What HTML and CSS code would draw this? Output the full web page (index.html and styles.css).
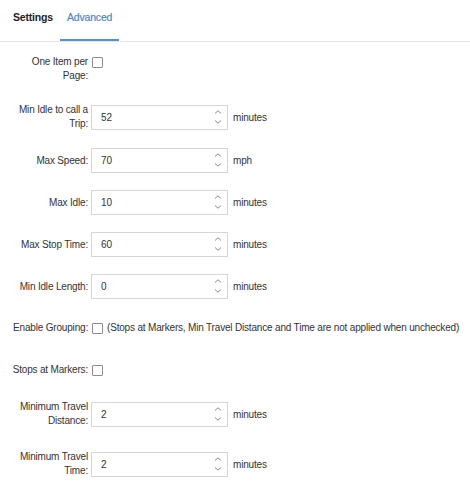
FILE: index.html
```html
<!DOCTYPE html>
<html lang="en">
<head>
  <meta charset="UTF-8">
  <meta name="viewport" content="width=device-width, initial-scale=1.0">
  <title>Trip Settings</title>
  <link rel="stylesheet" href="styles.css">
</head>
<body>
  <div class="tabs">
    <a class="tab">Settings</a>
    <a class="tab active">Advanced</a>
  </div>

  <form class="advanced">
    <div class="row check first">
      <label class="lbl">One Item per Page:</label>
      <input type="checkbox" class="box">
    </div>

    <div class="row">
      <label class="lbl">Min Idle to call a Trip:</label>
      <div class="spin"><input type="text" value="52"><span class="arrows"><svg viewBox="0 0 8 4"><path d="M1 3.5 4 .8 7 3.5"/></svg><svg viewBox="0 0 8 4"><path d="M1 .5 4 3.2 7 .5"/></svg></span></div>
      <span class="unit">minutes</span>
    </div>

    <div class="row">
      <label class="lbl">Max Speed:</label>
      <div class="spin"><input type="text" value="70"><span class="arrows"><svg viewBox="0 0 8 4"><path d="M1 3.5 4 .8 7 3.5"/></svg><svg viewBox="0 0 8 4"><path d="M1 .5 4 3.2 7 .5"/></svg></span></div>
      <span class="unit">mph</span>
    </div>

    <div class="row">
      <label class="lbl">Max Idle:</label>
      <div class="spin"><input type="text" value="10"><span class="arrows"><svg viewBox="0 0 8 4"><path d="M1 3.5 4 .8 7 3.5"/></svg><svg viewBox="0 0 8 4"><path d="M1 .5 4 3.2 7 .5"/></svg></span></div>
      <span class="unit">minutes</span>
    </div>

    <div class="row">
      <label class="lbl">Max Stop Time:</label>
      <div class="spin"><input type="text" value="60"><span class="arrows"><svg viewBox="0 0 8 4"><path d="M1 3.5 4 .8 7 3.5"/></svg><svg viewBox="0 0 8 4"><path d="M1 .5 4 3.2 7 .5"/></svg></span></div>
      <span class="unit">minutes</span>
    </div>

    <div class="row">
      <label class="lbl">Min Idle Length:</label>
      <div class="spin"><input type="text" value="0"><span class="arrows"><svg viewBox="0 0 8 4"><path d="M1 3.5 4 .8 7 3.5"/></svg><svg viewBox="0 0 8 4"><path d="M1 .5 4 3.2 7 .5"/></svg></span></div>
      <span class="unit">minutes</span>
    </div>

    <div class="row check">
      <label class="lbl">Enable Grouping:</label>
      <input type="checkbox" class="box">
      <span class="note">(Stops at Markers, Min Travel Distance and Time are not applied when unchecked)</span>
    </div>

    <div class="row check">
      <label class="lbl">Stops at Markers:</label>
      <input type="checkbox" class="box">
    </div>

    <div class="row spaced">
      <label class="lbl">Minimum Travel Distance:</label>
      <div class="spin"><input type="text" value="2"><span class="arrows"><svg viewBox="0 0 8 4"><path d="M1 3.5 4 .8 7 3.5"/></svg><svg viewBox="0 0 8 4"><path d="M1 .5 4 3.2 7 .5"/></svg></span></div>
      <span class="unit">minutes</span>
    </div>

    <div class="row">
      <label class="lbl">Minimum Travel Time:</label>
      <div class="spin"><input type="text" value="2"><span class="arrows"><svg viewBox="0 0 8 4"><path d="M1 3.5 4 .8 7 3.5"/></svg><svg viewBox="0 0 8 4"><path d="M1 .5 4 3.2 7 .5"/></svg></span></div>
      <span class="unit">minutes</span>
    </div>
  </form>
</body>
</html>
```

FILE: styles.css
```css
body {
  margin: 0;
  background: #fff;
  color: #333;
  font-family: "Liberation Sans", Arial, sans-serif;
  font-size: 10px;
  letter-spacing: -.18px;
}
.tabs {
  display: flex;
  height: 41px;
  padding-left: 6px;
  border-bottom: 1px solid #e4e4e4;
}
.tab {
  box-sizing: border-box;
  height: 41px;
  padding: 11px 7px 0;
  font-size: 10.5px;
  font-weight: bold;
  color: #222;
  cursor: pointer;
}
.tab.active {
  font-weight: normal;
  color: #4f86c6;
  border-bottom: 2px solid #5b8fd0;
  -webkit-text-stroke: .2px #4f86c6;
}
.advanced {
  padding: 8px 0 0 8px;
}
.row {
  display: flex;
  align-items: center;
  min-height: 25px;
  margin-bottom: 17px;
}
.row.first {
  margin-bottom: 20px;
}
.row.spaced {
  margin-bottom: 22px;
}
.row.check {
  align-items: flex-start;
  min-height: 20px;
  padding-top: 5px;
}
.lbl {
  width: 80px;
  flex: none;
  text-align: right;
  line-height: 14px;
  color: #333;
}
.box {
  -webkit-appearance: none;
  appearance: none;
  width: 11px;
  height: 11px;
  margin: 2px 0 0 4px;
  border: 1px solid #8b8b94;
  border-radius: 1px;
  background: #fff;
  flex: none;
}
.note {
  margin-left: 4px;
  line-height: 14px;
  white-space: nowrap;
}
.spin {
  display: flex;
  box-sizing: border-box;
  width: 137px;
  height: 25px;
  margin-left: 3px;
  border: 1px solid #d6d6d6;
  background: #fff;
}
.spin input {
  flex: 1;
  min-width: 0;
  border: 0;
  outline: 0;
  padding: 0 0 0 9px;
  font: inherit;
  color: #333;
  background: transparent;
}
.arrows {
  display: flex;
  flex-direction: column;
  justify-content: space-between;
  width: 8px;
  padding: 4px 5px 5px 0;
}
.arrows svg {
  width: 8px;
  height: 4px;
  fill: none;
  stroke: #8a8a8a;
  stroke-width: 1;
}
.unit {
  margin-left: 5px;
}
```
